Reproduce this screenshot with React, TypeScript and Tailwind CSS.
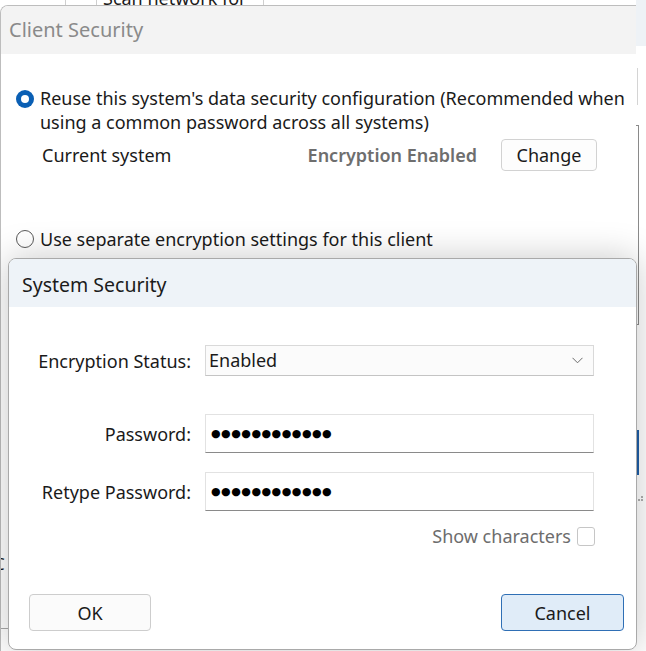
import React from "react";

const font = { fontFamily: '"Noto Sans", "Open Sans", sans-serif' };

function Radio({ checked }: { checked: boolean }) {
  return checked ? (
    <span className="flex h-[18px] w-[18px] shrink-0 items-center justify-center rounded-full bg-[#0a5fb4]">
      <span className="h-[8px] w-[8px] rounded-full bg-white" />
    </span>
  ) : (
    <span className="h-[18px] w-[18px] shrink-0 rounded-full border border-[#5a5a5a] bg-white" />
  );
}

function PasswordField() {
  return (
    <div className="flex h-[39px] items-center border border-[#e2e2e2] border-b-[#8a8a8a] bg-white pl-[5px]">
      <span
        className="text-[11px] leading-none tracking-[0.5px] text-black"
        style={{ fontFamily: '"DejaVu Sans", sans-serif' }}
      >
        ●●●●●●●●●●●●
      </span>
    </div>
  );
}

export default function App() {
  return (
    <div className="relative h-[651px] w-[646px] overflow-hidden bg-white text-[#1a1a1a]" style={font}>
      {/* background app peeking at the top */}
      <div className="absolute left-[65px] top-0 h-[8px] w-px bg-[#cfcfcf]" />
      <div className="absolute left-[96px] top-0 h-[8px] w-px bg-[#cfcfcf]" />
      <div className="absolute left-[263px] top-0 h-[8px] w-px bg-[#cfcfcf]" />
      <div className="absolute left-[103px] top-[-13px] text-[18px] leading-[22px] text-[#1a1a1a]">Scan network for</div>
      <div className="absolute left-[636px] top-0 h-[46px] w-[10px] bg-[#eef2f6]" />
      <div className="absolute left-[637px] top-[68px] h-[37px] w-px bg-[#d4d4d4]" />
      <div className="absolute left-[636px] top-[125px] h-[200px] w-[3px] border-y border-r border-[#8a8a8a]" />
      <div className="absolute left-[637px] top-[430px] h-[45px] w-[2px] bg-[#1f5fa8]" />
      <div className="absolute left-[638px] top-[496px] grid grid-cols-2 gap-[1px]">
        <span className="h-[2px] w-[2px]" />
        <span className="h-[2px] w-[2px] bg-[#b0b0b0]" />
        <span className="h-[2px] w-[2px] bg-[#b0b0b0]" />
        <span className="h-[2px] w-[2px] bg-[#b0b0b0]" />
      </div>

      {/* Client Security window */}
      <div className="absolute left-0 top-[5px] flex h-[700px] w-[636px] flex-col overflow-hidden rounded-tl-[8px] border-l border-t border-[#bdbdbd] bg-white">
        <div className="flex h-[48px] shrink-0 items-center bg-[#f3f3f3] pl-[8px]">
          <span className="text-[20px] leading-none text-[#8a8a8a]">Client Security</span>
        </div>
        <div className="relative flex flex-col pt-[33px] text-[18px]">
          <div className="flex gap-[6px] pl-[15px] pr-[6px]">
            <span className="mt-[3px]">
              <Radio checked />
            </span>
            <p className="leading-[23.5px]">
              Reuse this system's data security configuration (Recommended when using a common password across all
              systems)
            </p>
          </div>
          <div className="mt-[5px] flex h-[32px] items-center pl-[41px] pr-[39px] leading-[24px]">
            <span className="flex-1">Current system</span>
            <span className="font-semibold text-[#6e6e6e]">Encryption Enabled</span>
            <button className="ml-[24px] h-[32px] w-[96px] rounded-[4px] border border-[#d2d2d2] bg-[#fdfdfd] leading-[24px]">
              Change
            </button>
          </div>
          <div className="mt-[56px] flex h-[24px] items-center gap-[6px] pl-[15px] leading-[24px]">
            <Radio checked={false} />
            <span>Use separate encryption settings for this client</span>
          </div>
          <div className="absolute left-[-7px] top-[497px] text-[17px] text-[#1a1a1a]">C</div>
          <div className="absolute left-0 top-[574px] h-px w-[10px] bg-[#a8a8a8]" />
        </div>
      </div>

      {/* System Security dialog */}
      <div className="absolute left-[8px] top-[258px] flex h-[392px] w-[629px] flex-col overflow-hidden rounded-[8px] border border-[#a9a9a9] bg-white shadow-[0_0_36px_rgba(0,0,0,0.22)]">
        <div className="flex h-[48px] shrink-0 items-center bg-[#eef3f8] pl-[13px]">
          <span className="pt-[3px] text-[19.5px] leading-none text-[#1b1b1b]">System Security</span>
        </div>
        <div className="flex flex-col pt-[38px] text-[18px] leading-[24px]">
          <div className="grid grid-cols-[182px_389px] items-center gap-x-[14px]">
            <span className="text-right">Encryption Status:</span>
            <div className="flex h-[31px] items-center justify-between border border-[#d9d9d9] border-b-[#c4c4c4] bg-[#fbfbfb] pl-[3px] pr-[10px]">
              <span className="pb-[2px] leading-none">Enabled</span>
              <svg width="11" height="7" viewBox="0 0 11 7" fill="none">
                <path d="M0.5 0.8 L5.5 5.8 L10.5 0.8" stroke="#6b6b6b" strokeWidth="1" />
              </svg>
            </div>
          </div>
          <div className="mt-[38px] grid grid-cols-[182px_389px] items-center gap-x-[14px]">
            <span className="text-right">Password:</span>
            <PasswordField />
          </div>
          <div className="mt-[19px] grid grid-cols-[182px_389px] items-center gap-x-[14px]">
            <span className="text-right">Retype Password:</span>
            <PasswordField />
          </div>
          <div className="mt-[13px] flex h-[24px] items-center justify-end gap-[6px] pr-[41px]">
            <span className="text-[#6d6d6d]">Show characters</span>
            <span className="h-[19px] w-[18px] rounded-[3px] border border-[#c6c6c6] bg-white" />
          </div>
          <div className="mt-[46px] flex items-center justify-between pl-[20px] pr-[12px]">
            <button className="h-[37px] w-[122px] rounded-[4px] border border-[#cdcdcd] bg-[#fbfbfb]">
              OK
            </button>
            <button className="h-[37px] w-[123px] rounded-[4px] border border-[#2f6fb5] bg-[#e0ecf8]">
              Cancel
            </button>
          </div>
        </div>
      </div>
    </div>
  );
}
